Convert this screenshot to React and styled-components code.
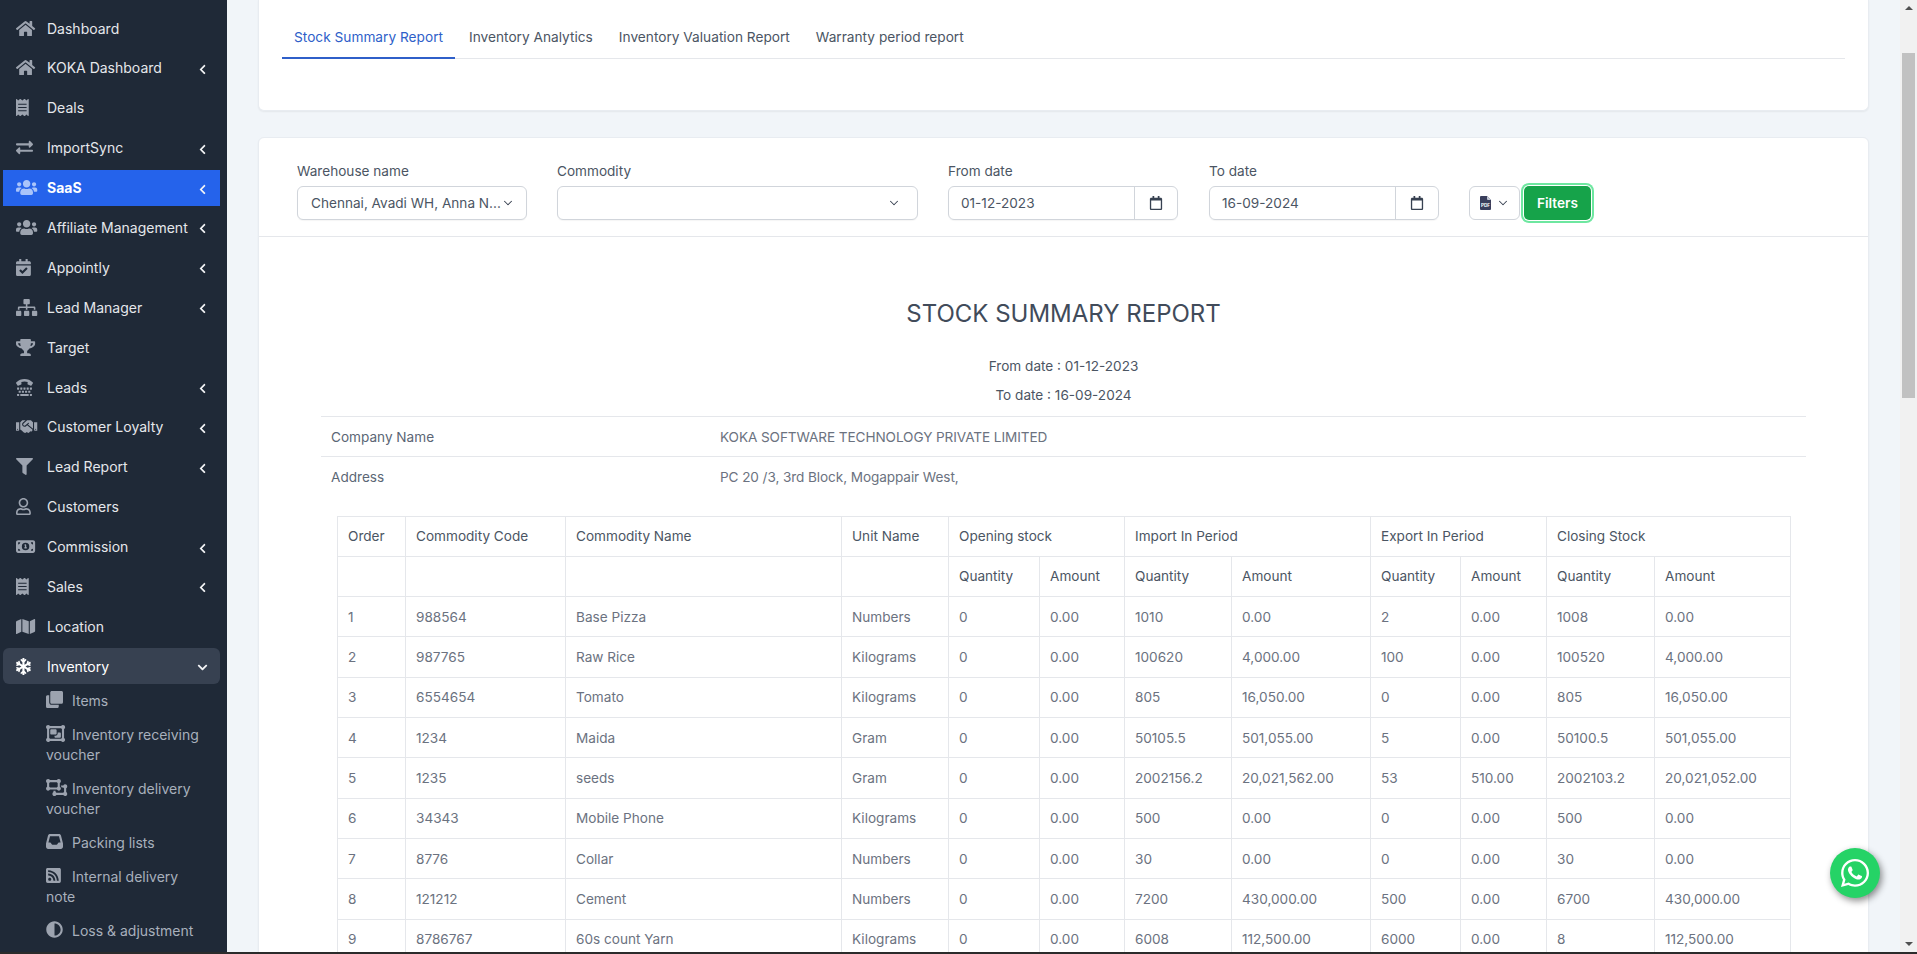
import styled, { createGlobalStyle } from 'styled-components';
import {
	FaHome,
	FaReceipt,
	FaExchangeAlt,
	FaUsers,
	FaCalendarCheck,
	FaSitemap,
	FaTrophy,
	FaTty,
	FaHandshake,
	FaFilter,
	FaRegUser,
	FaMap,
	FaSnowflake,
	FaClone,
	FaRssSquare,
	FaAdjust,
	FaChevronLeft,
	FaChevronDown,
	FaRegCalendar,
	FaWhatsapp,
} from 'react-icons/fa';
import { FaObjectGroup, FaObjectUngroup, FaInbox, FaMoneyBill1 } from 'react-icons/fa6';
import { ChevronDown } from 'lucide-react';

const GlobalStyle = createGlobalStyle`
	html, body {
		margin: 0;
		height: 100%;
		overflow: hidden;
		font-family: Inter, 'Liberation Sans', sans-serif;
		font-size: 13.6px;
	}
	* {
		box-sizing: border-box;
	}
`;

const Frame = styled.div`
	height: 100vh;
	display: flex;
	flex-direction: column;
`;

const Body = styled.div`
	flex: 1;
	min-height: 0;
	display: flex;
	overflow: hidden;
`;

const BottomEdge = styled.div`
	height: 2px;
	background: #2b2b2b;
`;

const Sidebar = styled.nav`
	width: 227px;
	flex: none;
	background: #1f2937;
	padding: 10px 7px 0 3px;
	display: flex;
	flex-direction: column;
	gap: 3.9px;
	overflow: hidden;
	font-size: 14px;
`;

const NavItem = styled.a`
	height: 36px;
	flex: none;
	display: flex;
	align-items: center;
	padding: 0 12px 0 13px;
	font-weight: ${(p) => (p.$active ? 700 : 400)};
	color: ${(p) => (p.$active || p.$open ? '#ffffff' : '#e5e7eb')};
	background: ${(p) => (p.$active ? '#2563eb' : p.$open ? '#374151' : 'transparent')};
	border-radius: ${(p) => (p.$open ? '6px' : '0')};
`;

const NavIcon = styled.span`
	width: 31px;
	flex: none;
	display: flex;
	align-items: center;
	color: ${(p) => (p.$active ? '#a9c4fa' : p.$open ? '#ffffff' : '#9ca3af')};

	svg {
		width: 27px;
		height: 17px;
	}
`;

const NavLabel = styled.span`
	flex: 1;
	white-space: nowrap;
`;

const Caret = styled.span`
	display: flex;
	margin-top: 3px;
	font-size: 11px;
	color: #f3f4f6;
`;

const SubMenu = styled.div`
	margin-top: -3.9px;
	padding: 0 10px 0 43px;
	display: flex;
	flex-direction: column;
`;

const SubItem = styled.a`
	display: block;
	padding: 7px 0;
	line-height: 20px;
	color: #a8b0bc;
`;

const SubIcon = styled.span`
	display: inline-block;
	width: 26px;
	line-height: 17px;
	vertical-align: -2px;
	color: #9ca3af;

	svg {
		width: 24px;
		height: 17px;
	}
`;

const Main = styled.main`
	flex: 1;
	min-width: 0;
	background: #f1f5f9;
	padding: 0 31px;
	display: flex;
	flex-direction: column;
	gap: 26px;
	overflow: hidden;
`;

const Card = styled.section`
	flex: none;
	background: #ffffff;
	border: 1px solid #e8ecf1;
	border-radius: 6px;
	box-shadow: 0 1px 2px rgba(0, 0, 0, 0.06);
`;

const TabCard = styled(Card)`
	border-top: none;
	border-top-left-radius: 0;
	border-top-right-radius: 0;
	padding: 0 23px 51px;
`;

const TabList = styled.div`
	height: 59px;
	display: flex;
	gap: 2px;
	border-bottom: 1px solid #e5e7eb;
`;

const Tab = styled.a`
	height: 59px;
	padding: 27px 12px 0;
	line-height: 20px;
	font-size: 13.7px;
	color: ${(p) => (p.$active ? '#2f5fc9' : '#4b5563')};
	border-bottom: ${(p) => (p.$active ? '2px solid #2f5fc9' : 'none')};
`;

const FilterBar = styled.div`
	display: flex;
	padding: 23px 38px 16px;
	border-bottom: 1px solid #e5e7eb;
`;

const Field = styled.div`
	width: ${(p) => p.$width}px;
	margin-right: ${(p) => p.$gap}px;
	flex: none;
`;

const FieldLabel = styled.div`
	height: 20px;
	margin-bottom: 5px;
	line-height: 20px;
	color: #4b5563;
`;

const Select = styled.div`
	height: 34px;
	display: flex;
	align-items: center;
	justify-content: space-between;
	padding: 0 16px 0 13px;
	color: #4b5563;
	background: #fff;
	border: 1px solid #d1d5db;
	border-radius: 6px;
	box-shadow: 0 1px 1px rgba(0, 0, 0, 0.04);
	white-space: nowrap;

	svg {
		flex: none;
		color: #374151;
	}
`;

const DateBox = styled.div`
	height: 34px;
	display: flex;
	color: #4b5563;
	border: 1px solid #d1d5db;
	border-radius: 6px;
	box-shadow: 0 1px 1px rgba(0, 0, 0, 0.04);
`;

const DateValue = styled.div`
	flex: 1;
	display: flex;
	align-items: center;
	padding-left: 12px;
`;

const DateAddon = styled.div`
	width: 43px;
	display: flex;
	align-items: center;
	justify-content: center;
	border-left: 1px solid #d1d5db;
	color: #374151;
	font-size: 14px;
`;

const Actions = styled.div`
	display: flex;
	align-items: center;
	padding-top: 25px;
`;

const ExportButton = styled.button`
	width: 51px;
	height: 34px;
	display: flex;
	align-items: center;
	justify-content: center;
	gap: 5px;
	padding: 0;
	margin-right: 4px;
	background: #fff;
	border: 1px solid #d1d5db;
	border-radius: 6px;
	color: #374151;
`;

const FilterButton = styled.button`
	width: 67px;
	height: 34px;
	padding: 0;
	background: #16a34a;
	color: #fff;
	border: none;
	border-radius: 5px;
	font: 600 13.6px Inter, sans-serif;
	box-shadow: 0 0 0 1px #fff, 0 0 0 3px #6ee7a0;
`;

const ReportBody = styled.div`
	padding: 61px 62px 0;
`;

const ReportTitle = styled.h1`
	margin: 0 0 26px;
	font-size: 24px;
	line-height: 32px;
	font-weight: 400;
	text-align: center;
	color: #414b5a;
`;

const ReportDate = styled.p`
	margin: 0 0 9px;
	line-height: 20px;
	text-align: center;
	color: #4b5563;
`;

const InfoTable = styled.table`
	width: 100%;
	margin-top: 11px;
	border-collapse: collapse;
	table-layout: fixed;
	color: #6b7280;

	td {
		height: 40px;
		padding: 0 10px;
		border-top: 1px solid #e5e7eb;
	}
	td:first-child {
		width: 388px;
		color: #5b6675;
	}
	td:last-child {
		padding-left: 11px;
		letter-spacing: -0.09px;
	}
`;

const StockTable = styled.table`
	width: 1453px;
	margin: 19px 16px 0;
	border-collapse: collapse;
	table-layout: fixed;

	th,
	td {
		height: 40.33px;
		padding: 0 10px;
		border: 1px solid #e5e7eb;
		text-align: left;
		white-space: nowrap;
	}
	th {
		font-weight: 400;
		color: #4b5563;
	}
	td {
		color: #6b7280;
	}
`;

const ScrollTrack = styled.div`
	width: 17px;
	flex: none;
	background: #f1f1f1;
	display: flex;
	flex-direction: column;
	align-items: center;
`;

const ScrollArrow = styled.span`
	width: 0;
	height: 0;
	margin: ${(p) => (p.$down ? 'auto 0 6px' : '6px 0 0')};
	border-left: 4px solid transparent;
	border-right: 4px solid transparent;
	border-bottom: ${(p) => (p.$down ? 'none' : '4px solid #505050')};
	border-top: ${(p) => (p.$down ? '4px solid #505050' : 'none')};
`;

const ScrollThumb = styled.div`
	width: 13px;
	height: 345px;
	margin-top: 43px;
	background: #c1c1c1;
`;

const ChatBubble = styled.a`
	position: fixed;
	left: 1830px;
	top: 848px;
	width: 50px;
	height: 50px;
	display: flex;
	align-items: center;
	justify-content: center;
	border-radius: 50%;
	background: #25d366;
	color: #fff;
	font-size: 32px;
	box-shadow: 2px 3px 7px rgba(0, 0, 0, 0.45);
`;

// glyphs keep their own width, scaled to the row's icon height and pinned left
const glyph = (Icon) => <Icon preserveAspectRatio="xMinYMid meet" />;

function PdfIcon() {
	return (
		<svg width="11" height="14" viewBox="0 0 11 14">
			<path d="M1 0h6l4 4v9a1 1 0 0 1-1 1H1a1 1 0 0 1-1-1V1a1 1 0 0 1 1-1z" fill="#3a3f5c" />
			<path d="M7 0l4 4H8a1 1 0 0 1-1-1z" fill="#c4cad6" />
			<text x="5.5" y="10.5" fontSize="4.6" fontWeight="700" fill="#fff" textAnchor="middle" fontFamily="Inter, sans-serif">
				PDF
			</text>
		</svg>
	);
}

const navItems = [
	{ label: 'Dashboard', icon: FaHome },
	{ label: 'KOKA Dashboard', icon: FaHome, caret: true },
	{ label: 'Deals', icon: FaReceipt },
	{ label: 'ImportSync', icon: FaExchangeAlt, caret: true },
	{ label: 'SaaS', icon: FaUsers, caret: true, active: true },
	{ label: 'Affiliate Management', icon: FaUsers, caret: true },
	{ label: 'Appointly', icon: FaCalendarCheck, caret: true },
	{ label: 'Lead Manager', icon: FaSitemap, caret: true },
	{ label: 'Target', icon: FaTrophy },
	{ label: 'Leads', icon: FaTty, caret: true },
	{ label: 'Customer Loyalty', icon: FaHandshake, caret: true },
	{ label: 'Lead Report', icon: FaFilter, caret: true },
	{ label: 'Customers', icon: FaRegUser },
	{ label: 'Commission', icon: FaMoneyBill1, caret: true },
	{ label: 'Sales', icon: FaReceipt, caret: true },
	{ label: 'Location', icon: FaMap },
];

const subItems = [
	{ label: 'Items', icon: FaClone },
	{ label: 'Inventory receiving voucher', icon: FaObjectGroup },
	{ label: 'Inventory delivery voucher', icon: FaObjectUngroup },
	{ label: 'Packing lists', icon: FaInbox },
	{ label: 'Internal delivery note', icon: FaRssSquare },
	{ label: 'Loss & adjustment', icon: FaAdjust },
];

const tabs = ['Stock Summary Report', 'Inventory Analytics', 'Inventory Valuation Report', 'Warranty period report'];

const columnWidths = [68, 160, 276, 107, 91, 85, 107, 139, 90, 86, 108, 136];

const stockRows = [
	['1', '988564', 'Base Pizza', 'Numbers', '0', '0.00', '1010', '0.00', '2', '0.00', '1008', '0.00'],
	['2', '987765', 'Raw Rice', 'Kilograms', '0', '0.00', '100620', '4,000.00', '100', '0.00', '100520', '4,000.00'],
	['3', '6554654', 'Tomato', 'Kilograms', '0', '0.00', '805', '16,050.00', '0', '0.00', '805', '16,050.00'],
	['4', '1234', 'Maida', 'Gram', '0', '0.00', '50105.5', '501,055.00', '5', '0.00', '50100.5', '501,055.00'],
	['5', '1235', 'seeds', 'Gram', '0', '0.00', '2002156.2', '20,021,562.00', '53', '510.00', '2002103.2', '20,021,052.00'],
	['6', '34343', 'Mobile Phone', 'Kilograms', '0', '0.00', '500', '0.00', '0', '0.00', '500', '0.00'],
	['7', '8776', 'Collar', 'Numbers', '0', '0.00', '30', '0.00', '0', '0.00', '30', '0.00'],
	['8', '121212', 'Cement', 'Numbers', '0', '0.00', '7200', '430,000.00', '500', '0.00', '6700', '430,000.00'],
	['9', '8786767', '60s count Yarn', 'Kilograms', '0', '0.00', '6008', '112,500.00', '6000', '0.00', '8', '112,500.00'],
];

function DateField({ label, value, gap }) {
	return (
		<Field $width={230} $gap={gap}>
			<FieldLabel>{label}</FieldLabel>
			<DateBox>
				<DateValue>{value}</DateValue>
				<DateAddon>
					<FaRegCalendar />
				</DateAddon>
			</DateBox>
		</Field>
	);
}

function App() {
	return (
		<Frame>
			<GlobalStyle />
			<Body>
				<Sidebar>
					{navItems.map((item) => (
						<NavItem key={item.label} $active={item.active}>
							<NavIcon $active={item.active}>{glyph(item.icon)}</NavIcon>
							<NavLabel>{item.label}</NavLabel>
							{item.caret && (
								<Caret>
									<FaChevronLeft />
								</Caret>
							)}
						</NavItem>
					))}
					<NavItem $open>
						<NavIcon $open>{glyph(FaSnowflake)}</NavIcon>
						<NavLabel>Inventory</NavLabel>
						<Caret>
							<FaChevronDown />
						</Caret>
					</NavItem>
					<SubMenu>
						{subItems.map((item) => (
							<SubItem key={item.label}>
								<SubIcon>{glyph(item.icon)}</SubIcon>
								{item.label}
							</SubItem>
						))}
					</SubMenu>
				</Sidebar>
				<Main>
					<TabCard>
						<TabList>
							{tabs.map((tab, i) => (
								<Tab key={tab} $active={i === 0}>
									{tab}
								</Tab>
							))}
						</TabList>
					</TabCard>
					<Card>
						<FilterBar>
							<Field $width={230} $gap={30}>
								<FieldLabel>Warehouse name</FieldLabel>
								<Select>
									Chennai, Avadi WH, Anna N...
									<ChevronDown size={14} strokeWidth={1.75} style={{ marginRight: -2 }} />
								</Select>
							</Field>
							<Field $width={361} $gap={30}>
								<FieldLabel>Commodity</FieldLabel>
								<Select>
									<span />
									<ChevronDown size={14} strokeWidth={1.75} />
								</Select>
							</Field>
							<DateField label="From date" value="01-12-2023" gap={31} />
							<DateField label="To date" value="16-09-2024" gap={30} />
							<Actions>
								<ExportButton>
									<PdfIcon />
									<ChevronDown size={14} strokeWidth={1.75} />
								</ExportButton>
								<FilterButton>Filters</FilterButton>
							</Actions>
						</FilterBar>
						<ReportBody>
							<ReportTitle>STOCK SUMMARY REPORT</ReportTitle>
							<ReportDate>From date : 01-12-2023</ReportDate>
							<ReportDate>To date : 16-09-2024</ReportDate>
							<InfoTable>
								<tbody>
									<tr>
										<td>Company Name</td>
										<td>KOKA SOFTWARE TECHNOLOGY PRIVATE LIMITED</td>
									</tr>
									<tr>
										<td>Address</td>
										<td>PC 20 /3, 3rd Block, Mogappair West,</td>
									</tr>
								</tbody>
							</InfoTable>
							<StockTable>
								<colgroup>
									{columnWidths.map((w, i) => (
										<col key={i} style={{ width: w }} />
									))}
								</colgroup>
								<thead>
									<tr>
										<th>Order</th>
										<th>Commodity Code</th>
										<th>Commodity Name</th>
										<th>Unit Name</th>
										<th colSpan={2}>Opening stock</th>
										<th colSpan={2}>Import In Period</th>
										<th colSpan={2}>Export In Period</th>
										<th colSpan={2}>Closing Stock</th>
									</tr>
									<tr>
										<th />
										<th />
										<th />
										<th />
										{[0, 1, 2, 3].flatMap((g) => [<th key={`q${g}`}>Quantity</th>, <th key={`a${g}`}>Amount</th>])}
									</tr>
								</thead>
								<tbody>
									{stockRows.map((row) => (
										<tr key={row[0]}>
											{row.map((cell, i) => (
												<td key={i}>{cell}</td>
											))}
										</tr>
									))}
								</tbody>
							</StockTable>
						</ReportBody>
					</Card>
				</Main>
				<ScrollTrack>
					<ScrollArrow />
					<ScrollThumb />
					<ScrollArrow $down />
				</ScrollTrack>
			</Body>
			<BottomEdge />
			<ChatBubble>
				<FaWhatsapp />
			</ChatBubble>
		</Frame>
	);
}

export default App;
